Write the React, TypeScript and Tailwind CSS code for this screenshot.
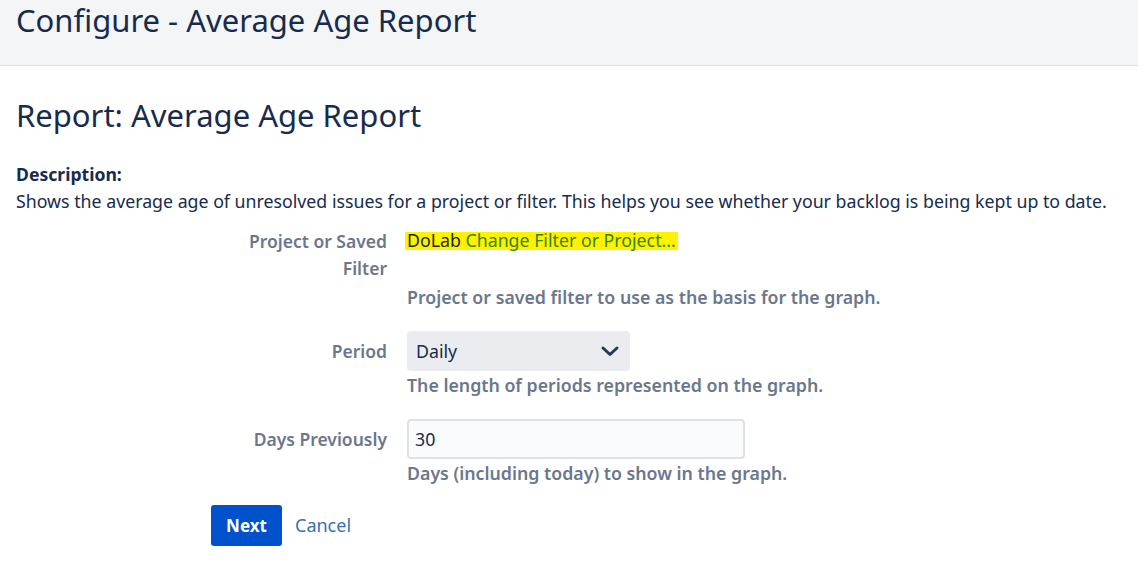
import React from 'react';

const font = { fontFamily: '"Noto Sans", "Open Sans", sans-serif' };

const FieldRow = ({ label, children, help }: { label: React.ReactNode; children: React.ReactNode; help: string }) => (
  <div className="flex">
    <div className="w-[387px] shrink-0 text-right text-[17.5px] font-semibold leading-[27px] text-[#6b778c]">{label}</div>
    <div className="ml-[20px] flex flex-col">
      {children}
      <div className="mt-[2px] text-[17.75px] font-semibold leading-[24px] text-[#6b778c]">{help}</div>
    </div>
  </div>
);

export default function App() {
  return (
    <div className="min-h-[565px] bg-white text-[#172b4d]" style={font}>
      <div className="h-[66px] border-b border-[#dfe1e6] bg-[#f4f5f7] px-4">
        <h1 className="text-[31px] leading-[40px] font-normal">Configure - Average Age Report</h1>
      </div>
      <div className="px-4 pt-[29px]">
        <h2 className="text-[31px] leading-[40px] font-normal">Report: Average Age Report</h2>
        <div className="mt-[27px] text-[17.6px] font-bold leading-[24px]">Description:</div>
        <p className="text-[17.75px] leading-[30px]">
          Shows the average age of unresolved issues for a project or filter. This helps you see whether your backlog is being kept up to date.
        </p>
      </div>
      <div className="mt-[12px] flex flex-col gap-[22px]">
        <FieldRow
          label={<>Project or Saved<br />Filter</>}
          help="Project or saved filter to use as the basis for the graph."
        >
          <div className="-ml-[2px] h-[55px] pt-[1px]">
            <span className="inline-block h-[18px] bg-[#fff200] px-[2px] text-[17.75px] leading-[17px]">
              <span className="text-[#1b2a1a]">DoLab</span>{' '}
              <span className="text-[#3a8400]">Change Filter or Project...</span>
            </span>
          </div>
        </FieldRow>
        <FieldRow label={<span className="leading-[40px]">Period</span>} help="The length of periods represented on the graph.">
          <div className="flex h-[40px] w-[223px] items-center justify-between rounded-[4px] bg-[#ebecf0] pl-[9px] pr-[8px]">
            <span className="text-[17.75px] text-[#172b4d]">Daily</span>
            <svg width="24" height="24" viewBox="0 0 24 24" fill="none" stroke="#253858" strokeWidth="3" strokeLinecap="round" strokeLinejoin="round">
              <path d="M5 9l7 6.5 7-6.5" />
            </svg>
          </div>
        </FieldRow>
        <FieldRow label={<span className="leading-[40px]">Days Previously</span>} help="Days (including today) to show in the graph.">
          <div className="flex h-[40px] w-[338px] items-center rounded-[4px] border-2 border-[#dfe1e6] bg-[#fafbfc] px-[6px]">
            <span className="text-[17.75px] text-[#172b4d]">30</span>
          </div>
        </FieldRow>
      </div>
      <div className="mt-[20px] flex items-center pl-[211px]">
        <button className="h-[41px] w-[71px] rounded-[3px] bg-[#0052cc] text-[17px] font-bold text-white">Next</button>
        <a className="ml-[13px] text-[18px] text-[#3572b0]">Cancel</a>
      </div>
    </div>
  );
}
